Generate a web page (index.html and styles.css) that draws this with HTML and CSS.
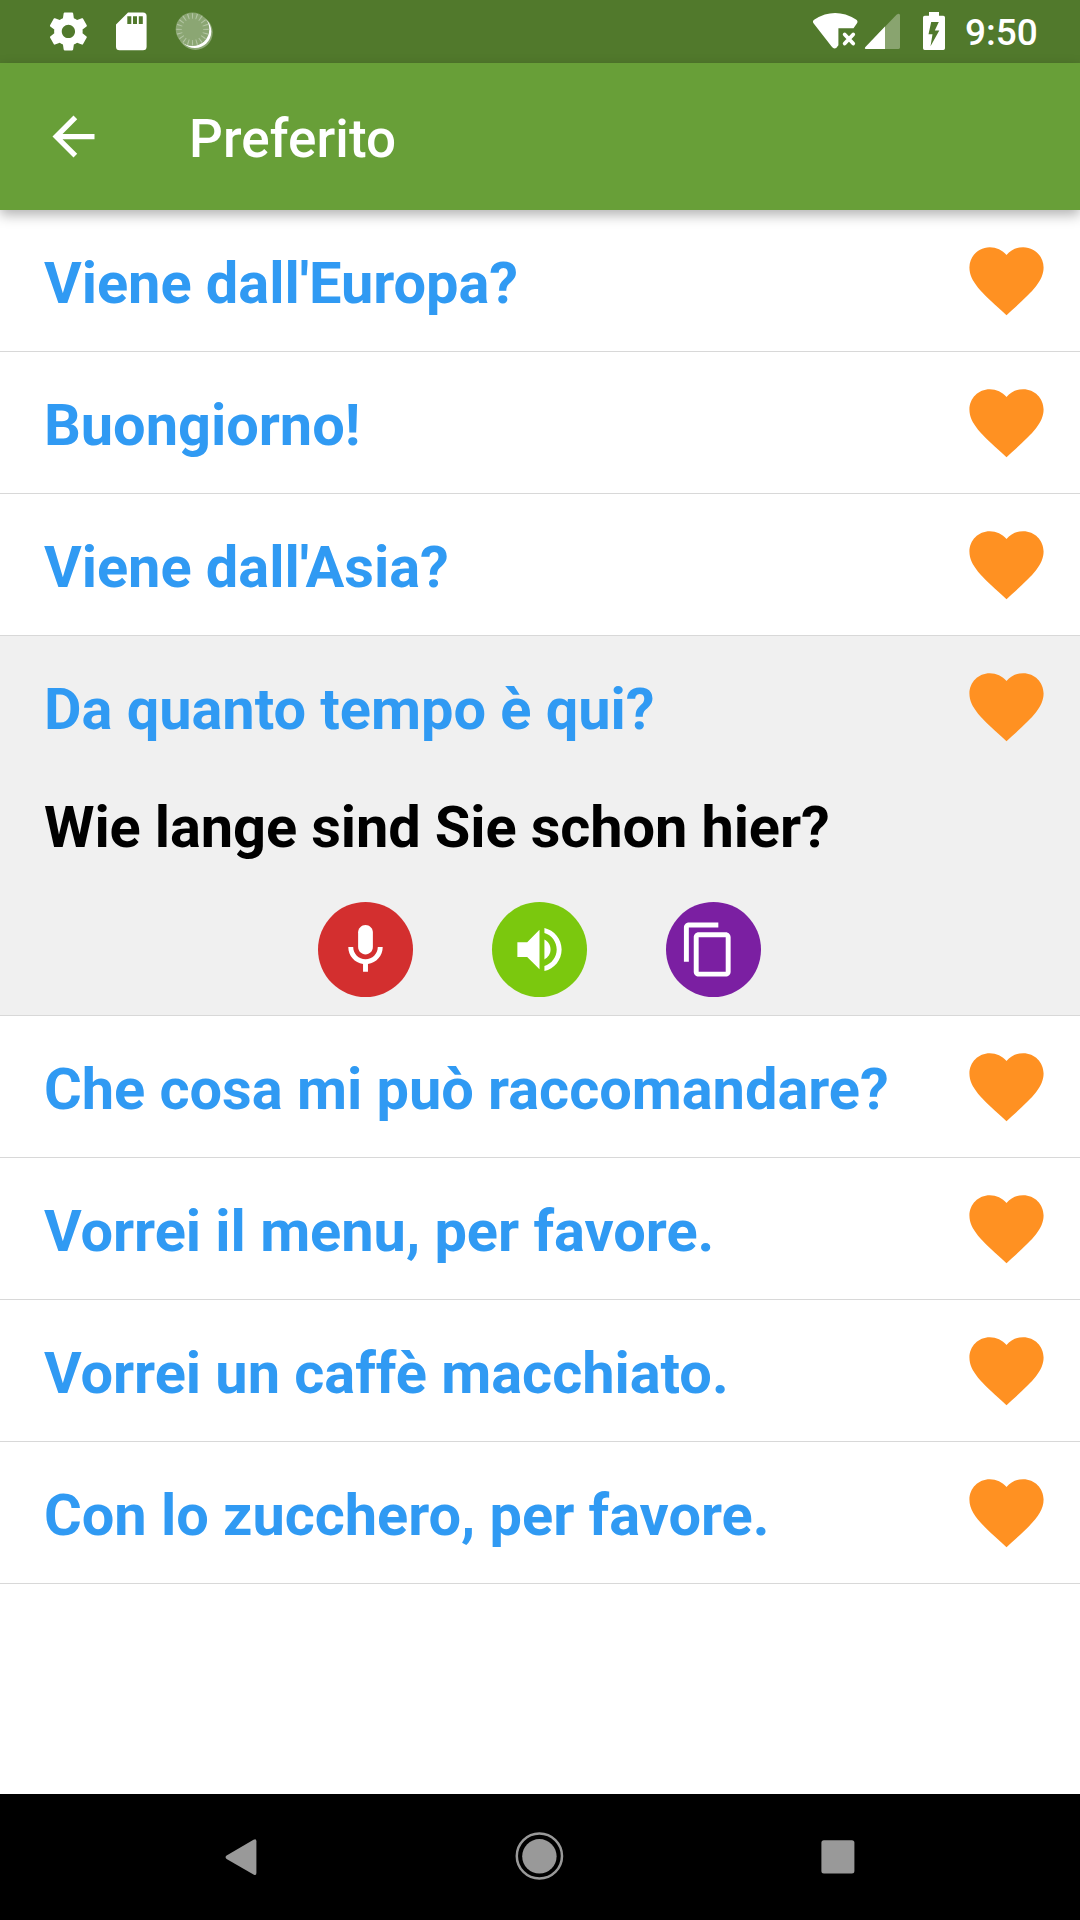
FILE: index.html
```html
<!DOCTYPE html>
<html lang="it">
<head>
<meta charset="utf-8">
<title>Preferito</title>
<link rel="stylesheet" href="styles.css">
</head>
<body>
<svg class="sprites" aria-hidden="true">
  <symbol id="heart" viewBox="0 0 24 24"><path d="M12 21.35l-1.45-1.32C5.4 15.36 2 12.28 2 8.5 2 5.42 4.42 3 7.5 3c1.74 0 3.41.81 4.5 2.09C13.09 3.81 14.76 3 16.5 3 19.58 3 22 5.42 22 8.5c0 3.78-3.4 6.86-8.55 11.54L12 21.35z"/></symbol>
</svg>
<div class="screen">
  <div class="status">
    <svg class="status-left" viewBox="0 0 240 63">
      <g transform="translate(45.6 8.6) scale(1.9)"><path d="M19.43 12.98c.04-.32.07-.64.07-.98s-.03-.66-.07-.98l2.11-1.65c.19-.15.24-.42.12-.64l-2-3.46c-.12-.22-.39-.3-.61-.22l-2.49 1c-.52-.4-1.08-.73-1.69-.98l-.38-2.65C14.46 2.18 14.25 2 14 2h-4c-.25 0-.46.18-.49.42l-.38 2.65c-.61.25-1.17.59-1.69.98l-2.49-1c-.23-.09-.49 0-.61.22l-2 3.46c-.13.22-.07.49.12.64l2.11 1.65c-.04.32-.07.65-.07.98s.03.66.07.98l-2.11 1.65c-.19.15-.24.42-.12.64l2 3.46c.12.22.39.3.61.22l2.49-1c.52.4 1.08.73 1.69.98l.38 2.65c.03.24.24.42.49.42h4c.25 0 .46-.18.49-.42l.38-2.65c.61-.25 1.17-.59 1.69-.98l2.49 1c.23.09.49 0 .61-.22l2-3.46c.12-.22.07-.49-.12-.64l-2.11-1.65zM12 15.5c-1.93 0-3.5-1.57-3.5-3.5s1.57-3.5 3.5-3.5 3.5 1.57 3.5 3.5-1.57 3.5-3.5 3.5z"/></g>
      <path fill-rule="evenodd" d="M128 12.500H143q3.600 0 3.600 3.600V46.700q0 3.600-3.600 3.600H119.600q-3.600 0-3.600-3.600V24.500ZM127.300 16.300V24H131.300V16.300ZM133 16.300V24H137V16.300ZM138.800 16.300V24H142.800V16.300Z"/>
      <circle cx="195.400" cy="32.600" r="17.300" opacity=".35"/>
      <circle cx="194.900" cy="31.600" r="16.400"/>
      <circle class="disc" cx="192.500" cy="29.300" r="16.800"/>
      <circle class="ticks" cx="192.500" cy="29.300" r="13.400" pathLength="200"/>
    </svg>
    <div class="status-right">
      <svg class="signals" viewBox="0 0 142 63">
        <path d="M.5 23.200Q-1 21 1.500 19.400Q22 6.500 43 19.400Q45.400 21 44 23.200L40.500 28.300H25.400V45.200Q22 51 18.600 46.500Z"/>
        <path class="cross" d="M31.700 34.500L40.200 43.500M40.200 34.500L31.700 43.500"/>
        <path opacity=".32" d="M53 48.900Q51 48.900 52.500 47L83.500 14.700Q87 12.500 87 15.500V47.500Q87 48.900 85.600 48.900Z"/>
        <path d="M53 48.900Q51 48.900 52.500 47L72 26.600V48.900Z"/>
        <path fill-rule="evenodd" d="M116 12H126V15.800H130.300Q132 15.800 132 17.500V48.300Q132 50 130.300 50H111.700Q110 50 110 48.300V17.500Q110 15.800 111.700 15.800H116ZM118.200 22L115.500 34.300H119.500L117.500 46.300L126.300 30.600H121.800L125.800 22Z"/>
      </svg>
      <span class="clock">9:50</span>
    </div>
  </div>
  <header class="appbar">
    <svg class="back" viewBox="0 0 24 24"><path d="M20 11H7.830l5.590-5.590L12 4l-8 8 8 8 1.410-1.410L7.830 13H20v-2z"/></svg>
    <h1 class="title">Preferito</h1>
  </header>
  <main class="list">
    <section class="item"><div class="row"><span class="phrase">Viene dall'Europa?</span><svg class="heart"><use href="#heart"/></svg></div></section>
    <section class="item"><div class="row"><span class="phrase">Buongiorno!</span><svg class="heart"><use href="#heart"/></svg></div></section>
    <section class="item"><div class="row"><span class="phrase">Viene dall'Asia?</span><svg class="heart"><use href="#heart"/></svg></div></section>
    <section class="item open">
      <div class="row"><span class="phrase">Da quanto tempo è qui?</span><svg class="heart"><use href="#heart"/></svg></div>
      <p class="translation">Wie lange sind Sie schon hier?</p>
      <div class="actions">
        <span class="action mic"><svg viewBox="0 0 24 24"><path d="M12 14c1.660 0 3-1.340 3-3V5c0-1.660-1.340-3-3-3S9 3.340 9 5v6c0 1.660 1.340 3 3 3z"/><path d="M17 11c0 2.760-2.240 5-5 5s-5-2.240-5-5H5c0 3.530 2.610 6.430 6 6.920V21h2v-3.080c3.390-.49 6-3.390 6-6.920h-2z"/></svg></span>
        <span class="action speaker"><svg viewBox="0 0 24 24"><path d="M3 9v6h4l5 5V4L7 9H3zm13.500 3c0-1.770-1.020-3.290-2.500-4.030v8.050c1.480-.73 2.500-2.250 2.500-4.020zM14 3.230v2.060c2.890.86 5 3.540 5 6.710s-2.110 5.850-5 6.710v2.060c4.010-.91 7-4.490 7-8.770s-2.990-7.860-7-8.770z"/></svg></span>
        <span class="action copy"><svg viewBox="0 0 24 24"><path d="M16 1H4c-1.100 0-2 .9-2 2v14h2V3h12V1zm3 4H8c-1.100 0-2 .9-2 2v14c0 1.100.9 2 2 2h11c1.100 0 2-.9 2-2V7c0-1.100-.9-2-2-2zm0 16H8V7h11v14z"/></svg></span>
      </div>
    </section>
    <section class="item"><div class="row"><span class="phrase">Che cosa mi può raccomandare?</span><svg class="heart"><use href="#heart"/></svg></div></section>
    <section class="item"><div class="row"><span class="phrase">Vorrei il menu, per favore.</span><svg class="heart"><use href="#heart"/></svg></div></section>
    <section class="item"><div class="row"><span class="phrase">Vorrei un caffè macchiato.</span><svg class="heart"><use href="#heart"/></svg></div></section>
    <section class="item"><div class="row"><span class="phrase">Con lo zucchero, per favore.</span><svg class="heart"><use href="#heart"/></svg></div></section>
  </main>
  <nav class="navbar">
    <svg viewBox="0 0 48 48"><path d="M9.600 22.500L36.500 6.800Q39.400 5.300 39.400 8.300V40Q39.400 43 36.500 41.400L9.600 25.900Q7.500 24.200 9.600 22.500Z"/></svg>
    <svg viewBox="0 0 48 48"><circle class="ring" cx="23.400" cy="23" r="22.600"/><circle cx="23.400" cy="23.300" r="17.200"/></svg>
    <svg viewBox="0 0 48 48"><rect x="6.400" y="7.200" width="33" height="33.400" rx="2.500"/></svg>
  </nav>
</div>
</body>
</html>
```

FILE: styles.css
```css
* { box-sizing: border-box; margin: 0; padding: 0; }
body { background: #fff; font-family: Roboto, sans-serif; }
svg { display: block; fill: #fff; flex: none; }
.sprites { display: none; }
.screen { width: 1080px; height: 1920px; display: flex; flex-direction: column; overflow: hidden; }

.status { height: 63px; background: #51792c; display: flex; justify-content: space-between; }
.status-left { width: 240px; height: 63px; }
.disc { fill: #8ba673; }
.ticks { fill: none; stroke: #b3c5a3; stroke-width: 5.500; stroke-dasharray: 2.500 7.500; stroke-dashoffset: 1.250; }
.status-right { display: flex; width: 267px; color: #fff; }
.signals { width: 142px; height: 63px; overflow: visible; margin-right: 10px; }
.clock { font-size: 37px; font-weight: 500; line-height: 66px; }
.cross { fill: none; stroke: #fff; stroke-width: 3.800; stroke-linecap: round; }

.appbar { height: 147px; background: #689f38; display: flex; align-items: center; padding-left: 42px; gap: 84px; box-shadow: 0 5px 12px rgba(0, 0, 0, .3); z-index: 1; }
.back { width: 63px; height: 63px; }
.title { color: #fff; font-size: 53px; font-weight: 500; line-height: 62px; padding-top: 4px; letter-spacing: .1px; }

.list { flex: 1; }
.item { border-bottom: 1px solid #d8d8d8; }
.open { background: #f0f0f0; }
.row { height: 141px; display: flex; align-items: center; justify-content: space-between; padding: 0 29px 0 44px; }
.phrase, .translation { font-size: 57.750px; font-weight: 700; line-height: 68px; white-space: nowrap; letter-spacing: -.04px; }
.phrase { color: #309af3; padding-top: 4px; }
.heart { width: 89px; height: 89px; fill: #ff9122; }
.translation { color: #000; padding: 16px 44px 0; height: 125px; letter-spacing: -.12px; }
.actions { display: flex; justify-content: center; gap: 79px; padding: 0 1px 18px 0; }
.action { width: 95px; height: 95px; border-radius: 50%; display: flex; align-items: center; justify-content: center; }
.action svg { width: 59px; height: 59px; }
.mic { background: #d32f2f; }
.speaker { background: #7bc80e; }
.copy { background: #7b1fa2; padding-right: 10px; }

.navbar { height: 126px; background: #000; display: flex; align-items: center; justify-content: center; gap: 251px; }
.navbar svg { width: 48px; height: 48px; fill: #999; overflow: visible; }
.navbar .ring { fill: none; stroke: #999; stroke-width: 2.500; }
```
